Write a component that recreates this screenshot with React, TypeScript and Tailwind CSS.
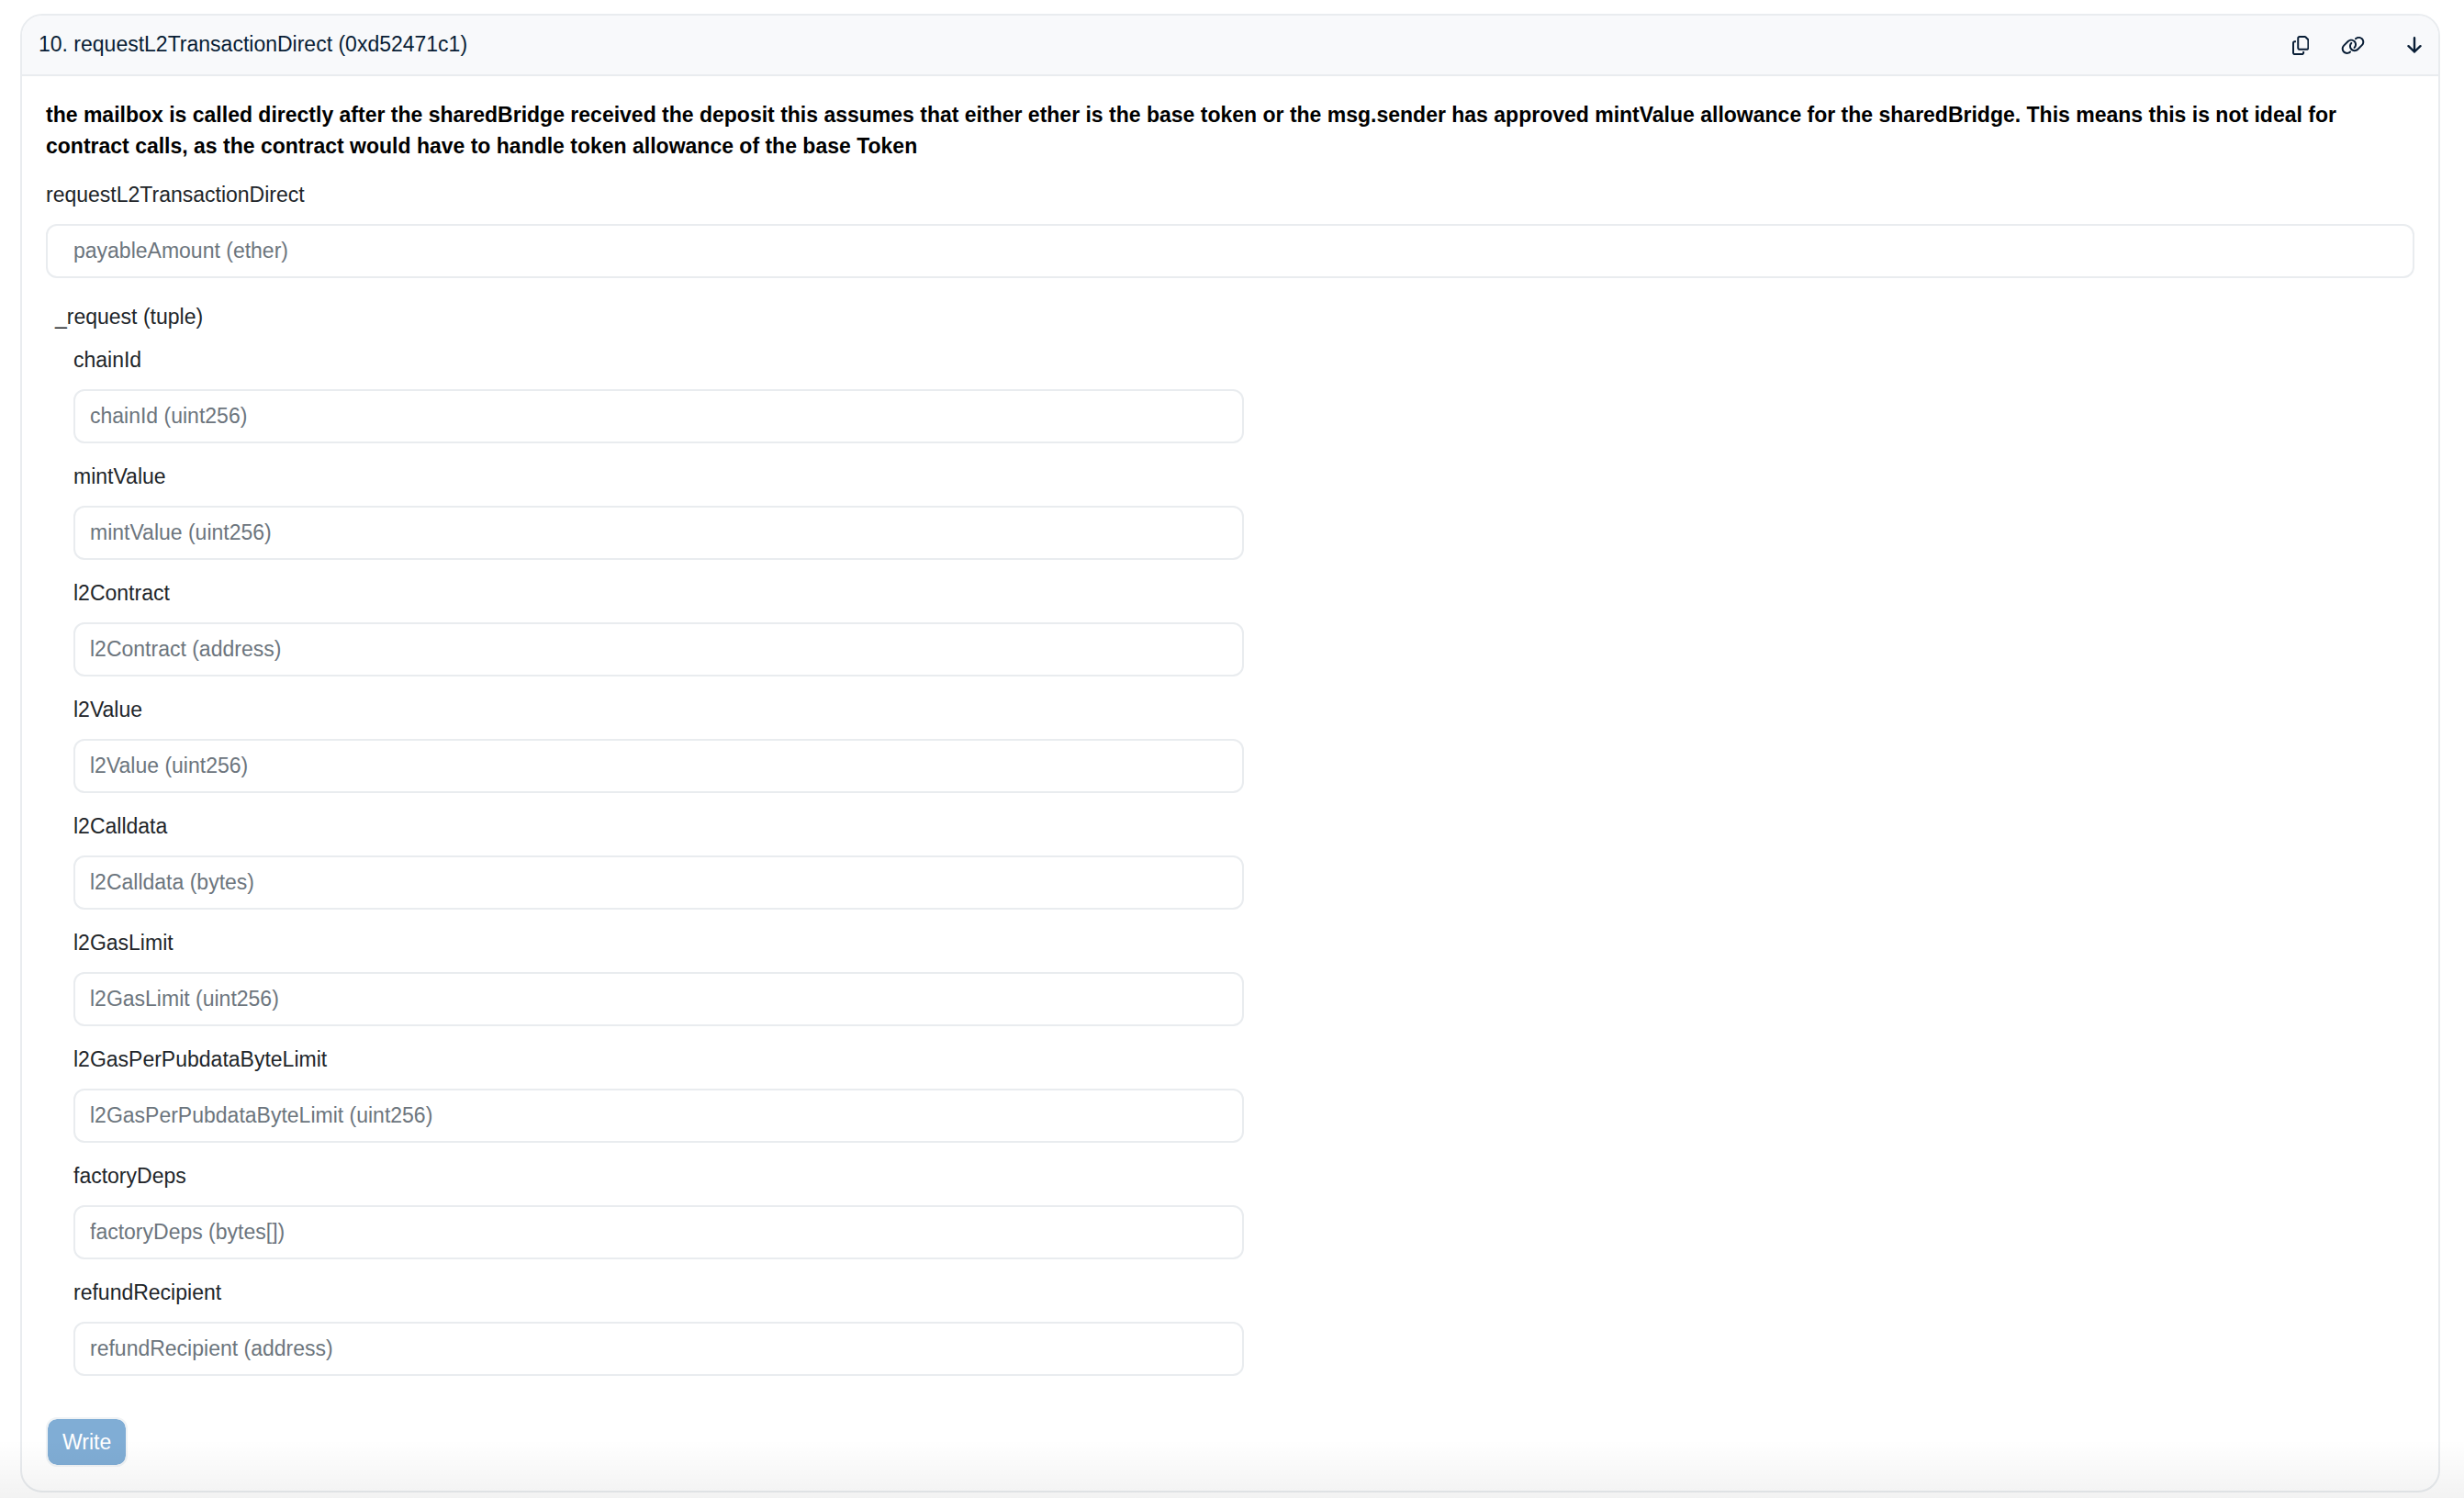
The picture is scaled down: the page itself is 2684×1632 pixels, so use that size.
import React from "react";

type Field = { name: string; type: string };

const FIELDS: Field[] = [
  { name: "chainId", type: "uint256" },
  { name: "mintValue", type: "uint256" },
  { name: "l2Contract", type: "address" },
  { name: "l2Value", type: "uint256" },
  { name: "l2Calldata", type: "bytes" },
  { name: "l2GasLimit", type: "uint256" },
  { name: "l2GasPerPubdataByteLimit", type: "uint256" },
  { name: "factoryDeps", type: "bytes[]" },
  { name: "refundRecipient", type: "address" },
];

const INPUT =
  "block h-[59px] w-full rounded-xl border-2 border-[#e9ecef] bg-white text-[23px] leading-[34px] text-[#212529] placeholder:text-[#6c757d] placeholder:opacity-100";

function CopyIcon() {
  return (
    <svg viewBox="0 0 448 512" className="h-[21px]" fill="currentColor" aria-hidden="true">
      <path d="M384 336H192c-8.800 0-16-7.200-16-16V64c0-8.800 7.200-16 16-16h140.100L400 115.900V320c0 8.800-7.200 16-16 16zM192 384h192c35.300 0 64-28.700 64-64V115.900c0-12.700-5.100-24.900-14.100-33.900L366.100 14.100C357.100 5.100 344.900 0 332.100 0H192c-35.300 0-64 28.700-64 64v256c0 35.300 28.700 64 64 64zM64 128c-35.300 0-64 28.700-64 64v256c0 35.300 28.700 64 64 64h192c35.300 0 64-28.700 64-64v-32h-48v32c0 8.800-7.200 16-16 16H64c-8.800 0-16-7.200-16-16V192c0-8.800 7.200-16 16-16h32v-48H64z" />
    </svg>
  );
}

function LinkIcon() {
  return (
    <svg viewBox="0 0 640 512" className="w-[26px]" fill="currentColor" aria-hidden="true">
      <path d="M580.3 267.2c56.2-56.2 56.2-147.3 0-203.5C526.8 10.2 440.9 7.3 383.9 57.2l-6.1 5.4c-10 8.7-11 23.9-2.3 33.9s23.9 11 33.9 2.300l6.1-5.4c38-33.2 95.2-31.3 130.9 4.400c37.400 37.400 37.400 98.100 0 135.600L433.100 346.600c-37.400 37.400-98.200 37.400-135.600 0c-35.700-35.700-37.600-92.900-4.400-130.900l4.700-5.400c8.700-10 7.700-25.100-2.300-33.900s-25.100-7.700-33.900 2.300l-4.700 5.400c-49.800 57-46.900 142.900 6.600 196.400c56.200 56.200 147.300 56.200 203.500 0L580.300 267.200zM59.700 244.800C3.500 301 3.500 392.100 59.700 448.200c53.600 53.600 139.500 56.400 196.500 6.500l6.100-5.400c10-8.700 11-23.900 2.300-33.900s-23.900-11-33.900-2.300l-6.100 5.400c-38 33.200-95.200 31.300-130.900-4.400c-37.400-37.400-37.400-98.100 0-135.600L207 165.400c37.400-37.400 98.100-37.400 135.600 0c35.700 35.700 37.600 92.900 4.400 130.900l-5.400 6.100c-8.700 10-7.700 25.100 2.300 33.900s25.100 7.700 33.900-2.300l5.400-6.100c49.900-57 47-142.900-6.500-196.500c-56.200-56.200-147.300-56.200-203.500 0L59.700 244.800z" />
    </svg>
  );
}

function ArrowDownIcon() {
  return (
    <svg viewBox="0 0 16 18" className="h-[18px]" fill="none" stroke="currentColor" strokeWidth="2.4" strokeLinecap="round" strokeLinejoin="round" aria-hidden="true">
      <path d="M8 1.200V16.500M1.500 10.200L8 16.500L14.500 10.200" />
    </svg>
  );
}

function TupleField({ name, type }: Field) {
  return (
    <div>
      <label htmlFor={name} className="mb-[15px] block">
        {name}
      </label>
      <input id={name} type="text" placeholder={`${name} (${type})`} className={`${INPUT} px-4`} />
    </div>
  );
}

export default function App() {
  return (
    <div className="relative min-h-screen bg-white pt-[15px] pr-[26px] pb-[6px] pl-[22px] font-['Liberation_Sans',Arial,sans-serif] text-[23px] leading-[34px] text-[#212529]">
      <section className="overflow-hidden rounded-3xl border-2 border-[#e9ecef]">
        <header className="flex items-center justify-between border-b-2 border-[#e9ecef] bg-[#f8f9fb] px-[18px] py-[14px] text-[#081d35]">
          <h2 className="pb-[2px]">10. requestL2TransactionDirect (0xd52471c1)</h2>
          <div className="flex items-center">
            <button type="button" aria-label="Copy method name" className="mr-[35px]">
              <CopyIcon />
            </button>
            <button type="button" aria-label="Copy permalink" className="mr-[46px]">
              <LinkIcon />
            </button>
            <button type="button" aria-label="Collapse">
              <ArrowDownIcon />
            </button>
          </div>
        </header>

        <form className="px-[26px] pt-[25px] pb-[26px]" onSubmit={(e) => e.preventDefault()}>
          <p className="mb-[19px] font-bold text-black">
            the mailbox is called directly after the sharedBridge received the deposit this assumes that either ether is
            the base token or the msg.sender has approved mintValue allowance for the sharedBridge. This means this is
            not ideal for contract calls, as the contract would have to handle token allowance of the base Token
          </p>
          <label htmlFor="payable" className="mb-[15px] block">
            requestL2TransactionDirect
          </label>
          <input id="payable" type="text" placeholder="payableAmount (ether)" className={`${INPUT} px-7`} />

          <fieldset className="mt-[25px]">
            <legend className="mb-[13px] pl-[10px]">_request (tuple)</legend>
            <div className="pl-[30px]">
              <div className="flex w-1/2 flex-col gap-[19px]">
                {FIELDS.map((f) => (
                  <TupleField key={f.name} {...f} />
                ))}
              </div>
            </div>
          </fieldset>

          <button
            type="submit"
            className="mt-[45px] block h-[54px] rounded-xl border-2 border-[#f0f3f5] bg-[#80add5] bg-clip-padding px-4 text-white"
          >
            Write
          </button>
        </form>
      </section>
      <div className="pointer-events-none absolute inset-x-0 bottom-0 h-16 bg-linear-to-b from-transparent to-black/5" />
    </div>
  );
}
